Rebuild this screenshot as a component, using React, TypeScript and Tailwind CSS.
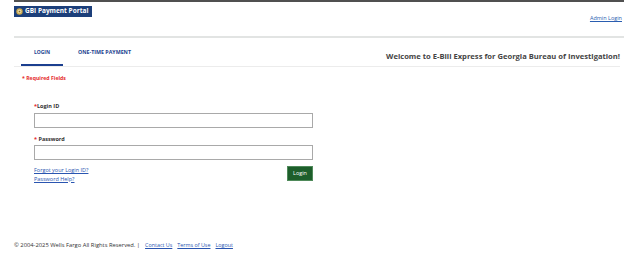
export default function App() {
  return (
    <div className="w-[624px] h-[255px] bg-white pl-[14px] font-['Open_Sans',sans-serif] text-[#333]">
      <div className="h-[2px] bg-[#505050]" />

      {/* header */}
      <div className="flex justify-between items-start h-[34px]">
        <div className="mt-[4px] h-[11px] w-[78px] bg-[#1c3f7a] flex items-center gap-[2px] pl-[2px]">
          <svg width="7" height="7" viewBox="0 0 10 10">
            <circle cx="5" cy="5" r="4.6" fill="#c9a64a" />
            <circle cx="5" cy="5" r="2.8" fill="#e8d9a0" />
            <circle cx="5" cy="5" r="1.2" fill="#8a6b25" />
          </svg>
          <span className="text-white font-bold text-[6.5px] leading-none">GBI Payment Portal</span>
        </div>
        <a className="mt-[14px] mr-[2px] text-[5.5px] leading-none text-[#2a5db0] underline">Admin Login</a>
      </div>
      <div className="h-[2px] bg-[#e2e4e3]" />

      {/* tabs */}
      <div className="flex justify-between items-end h-[28px] pr-[4px]">
        <div className="flex items-end pl-[7px]">
          <div className="w-[42px] h-[28px] flex items-center justify-center border-b-2 border-[#1b3f8f] pt-[3px]">
            <span className="text-[5px] font-bold text-[#1b3f8f] leading-none">LOGIN</span>
          </div>
          <div className="ml-[15px] h-[28px] flex items-center pt-[1px]">
            <span className="text-[5.3px] font-bold text-[#1b3f8f] leading-none">ONE-TIME PAYMENT</span>
          </div>
        </div>
        <div className="h-[28px] flex items-center pt-[9px]">
          <span className="text-[7.6px] font-bold text-[#444] leading-none">
            Welcome to E-Bill Express for Georgia Bureau of Investigation!
          </span>
        </div>
      </div>
      <div className="h-[1px] bg-[#ececec] mr-[4px]" />

      <div className="pl-[8px] pt-[9px] text-[5.2px] font-bold text-[#e52b2b] leading-none">* Required Fields</div>

      {/* form */}
      <div className="pl-[20px] pt-[23px] w-[299px]">
        <div className="text-[5.5px] font-bold leading-none text-[#333]">
          <span className="text-[#e52b2b]">*</span>Login ID
        </div>
        <div className="mt-[3px] h-[15px] border border-[#a9a9a9] bg-white" />
        <div className="mt-[9px] text-[5.5px] font-bold leading-none text-[#333]">
          <span className="text-[#e52b2b]">*</span> Password
        </div>
        <div className="mt-[3px] h-[15px] border border-[#a9a9a9] bg-white" />
        <div className="mt-[5px] flex justify-between items-start">
          <div className="flex flex-col gap-[3px] pt-[3px] text-[5.5px] leading-none text-[#2a55b0]">
            <a className="underline">Forgot your Login ID?</a>
            <a className="underline">Password Help?</a>
          </div>
          <button className="mt-[1px] w-[26px] h-[15px] bg-[#1d5e2b] border border-[#4f8a5a] text-white text-[5.5px] leading-none flex items-center justify-center">
            Login
          </button>
        </div>
      </div>

      {/* footer */}
      <div className="mt-[61px] flex items-center text-[5.8px] leading-none text-[#333]">
        <span>© 2004-2025 Wells Fargo All Rights Reserved. |</span>
        <a className="ml-[5px] text-[5.4px] underline text-[#2a55b0]">Contact Us</a>
        <a className="ml-[5px] text-[5.4px] underline text-[#2a55b0]">Terms of Use</a>
        <a className="ml-[5px] text-[5.4px] underline text-[#2a55b0]">Logout</a>
      </div>
    </div>
  );
}
